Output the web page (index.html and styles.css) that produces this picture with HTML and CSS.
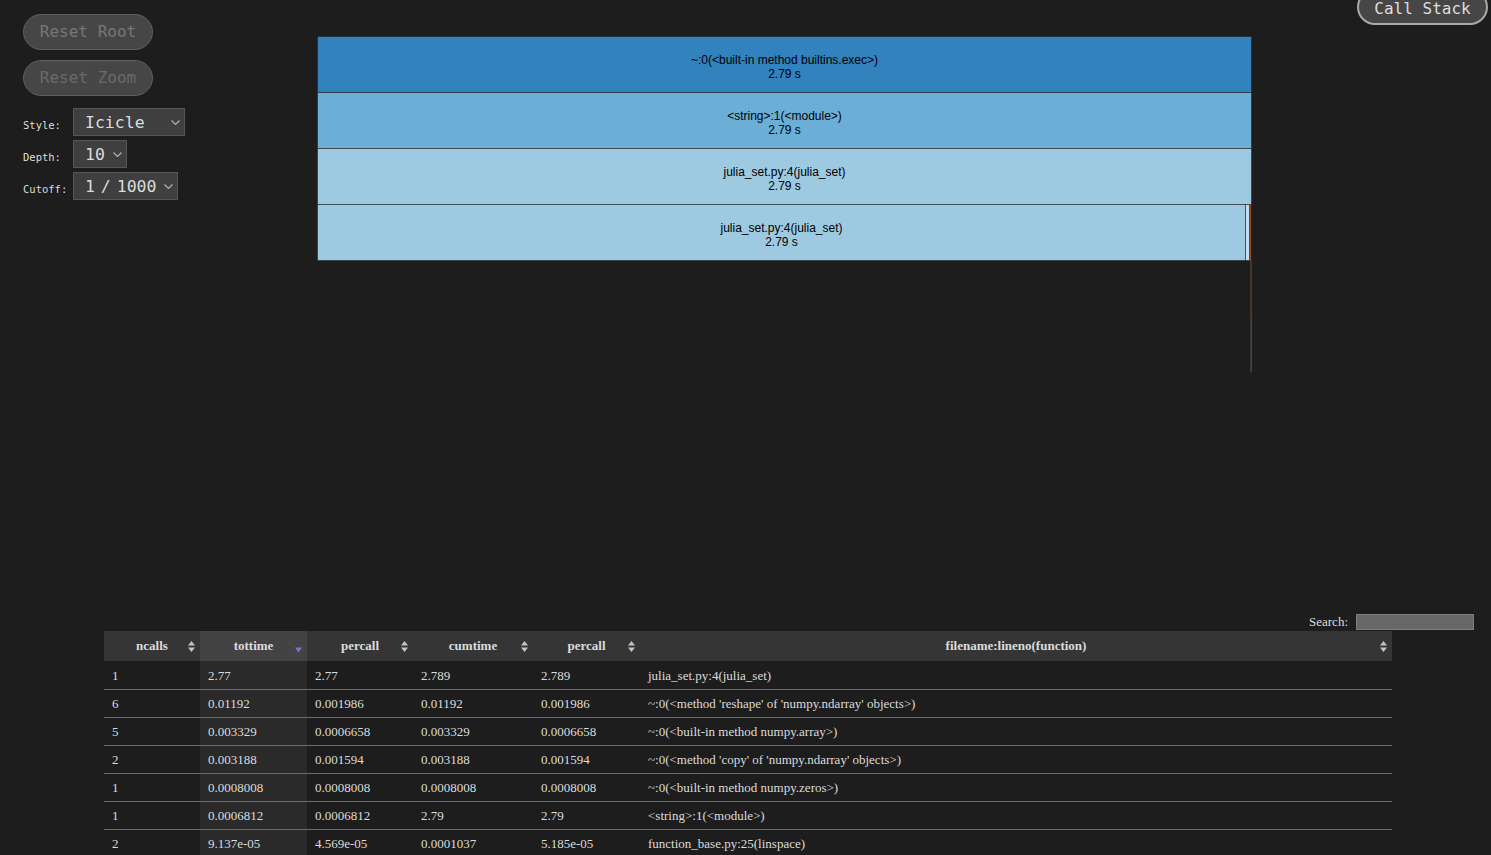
FILE: index.html
```html
<!DOCTYPE html>
<html lang="en">
<head>
<meta charset="utf-8">
<title>SnakeViz</title>
<link rel="stylesheet" href="styles.css">
</head>
<body>
<button class="pill callstack">Call Stack</button>

<div class="top">
  <aside class="sidebar">
    <button class="pill disabled">Reset Root</button>
    <button class="pill disabled dim">Reset Zoom</button>
    <div class="opts">
      <span class="opt-label">Style:</span>
      <div class="sel sel-style"><span>Icicle</span><svg class="chev" width="9" height="5" viewBox="0 0 9 5"><polyline points="0.5,0.5 4.5,4.5 8.5,0.5"/></svg></div>
      <span class="opt-label">Depth:</span>
      <div class="sel sel-depth"><span>10</span><svg class="chev" width="9" height="5" viewBox="0 0 9 5"><polyline points="0.5,0.5 4.5,4.5 8.5,0.5"/></svg></div>
      <span class="opt-label">Cutoff:</span>
      <div class="sel sel-cutoff"><span class="cut">1 / 1000</span><svg class="chev" width="9" height="5" viewBox="0 0 9 5"><polyline points="0.5,0.5 4.5,4.5 8.5,0.5"/></svg></div>
    </div>
  </aside>

  <div class="chart">
    <svg class="icicle" width="940" height="340" viewBox="0 0 940 340">
      <g class="frames">
        <rect x="0.5" y="0.5" width="934" height="56" fill="#3182bd"/>
        <rect x="0.5" y="56.5" width="934" height="56" fill="#6baed6"/>
        <rect x="0.5" y="112.5" width="934" height="56" fill="#9ecae1"/>
        <rect x="0.5" y="168.5" width="928" height="56" fill="#9ecae1"/>
        <rect x="928.5" y="168.5" width="4" height="56" fill="#c6dbef"/>
      </g>
      <rect class="sliver" x="932.7" y="168.5" width="1.4" height="56" fill="#9a4a22"/>
      <rect class="sliver" x="933.7" y="224.5" width="0.7" height="56" fill="#a0623a"/>
      <rect class="sliver" x="933.8" y="280.5" width="0.5" height="56" fill="#9a9a9a"/>
      <g class="labels">
        <text x="467.5" y="28">~:0(&lt;built-in method builtins.exec&gt;)</text>
        <text x="467.5" y="42">2.79 s</text>
        <text x="467.5" y="84">&lt;string&gt;:1(&lt;module&gt;)</text>
        <text x="467.5" y="98">2.79 s</text>
        <text x="467.5" y="140">julia_set.py:4(julia_set)</text>
        <text x="467.5" y="154">2.79 s</text>
        <text x="464.5" y="196">julia_set.py:4(julia_set)</text>
        <text x="464.5" y="210">2.79 s</text>
      </g>
    </svg>
  </div>
</div>

<div class="filter">
  <label class="search-label" for="q">Search:</label>
  <input id="q" class="search" type="text">
</div>

<table class="stats">
  <colgroup>
    <col class="c1"><col class="c2"><col class="c3"><col class="c4"><col class="c5"><col class="c6">
  </colgroup>
  <thead>
    <tr>
      <th><div class="hd"><span class="lbl">ncalls</span><svg class="sort" width="7" height="11" viewBox="0 0 7 11"><polygon points="0,4.5 3.5,0 7,4.5"/><polygon points="0,6.5 3.5,11 7,6.5"/></svg></div></th>
      <th class="sorted"><div class="hd"><span class="lbl">tottime</span><svg class="sort desc" width="7" height="11" viewBox="0 0 7 11"><polygon points="0,6.5 3.5,11.5 7,6.5"/></svg></div></th>
      <th><div class="hd"><span class="lbl">percall</span><svg class="sort" width="7" height="11" viewBox="0 0 7 11"><polygon points="0,4.5 3.5,0 7,4.5"/><polygon points="0,6.5 3.5,11 7,6.5"/></svg></div></th>
      <th><div class="hd"><span class="lbl">cumtime</span><svg class="sort" width="7" height="11" viewBox="0 0 7 11"><polygon points="0,4.5 3.5,0 7,4.5"/><polygon points="0,6.5 3.5,11 7,6.5"/></svg></div></th>
      <th><div class="hd"><span class="lbl">percall</span><svg class="sort" width="7" height="11" viewBox="0 0 7 11"><polygon points="0,4.5 3.5,0 7,4.5"/><polygon points="0,6.5 3.5,11 7,6.5"/></svg></div></th>
      <th><div class="hd"><span class="lbl">filename:lineno(function)</span><svg class="sort" width="7" height="11" viewBox="0 0 7 11"><polygon points="0,4.5 3.5,0 7,4.5"/><polygon points="0,6.5 3.5,11 7,6.5"/></svg></div></th>
    </tr>
  </thead>
  <tbody>
    <tr><td>1</td><td class="sc">2.77</td><td>2.77</td><td>2.789</td><td>2.789</td><td>julia_set.py:4(julia_set)</td></tr>
    <tr><td>6</td><td class="sc">0.01192</td><td>0.001986</td><td>0.01192</td><td>0.001986</td><td>~:0(&lt;method 'reshape' of 'numpy.ndarray' objects&gt;)</td></tr>
    <tr><td>5</td><td class="sc">0.003329</td><td>0.0006658</td><td>0.003329</td><td>0.0006658</td><td>~:0(&lt;built-in method numpy.array&gt;)</td></tr>
    <tr><td>2</td><td class="sc">0.003188</td><td>0.001594</td><td>0.003188</td><td>0.001594</td><td>~:0(&lt;method 'copy' of 'numpy.ndarray' objects&gt;)</td></tr>
    <tr><td>1</td><td class="sc">0.0008008</td><td>0.0008008</td><td>0.0008008</td><td>0.0008008</td><td>~:0(&lt;built-in method numpy.zeros&gt;)</td></tr>
    <tr><td>1</td><td class="sc">0.0006812</td><td>0.0006812</td><td>2.79</td><td>2.79</td><td>&lt;string&gt;:1(&lt;module&gt;)</td></tr>
    <tr><td>2</td><td class="sc">9.137e-05</td><td>4.569e-05</td><td>0.0001037</td><td>5.185e-05</td><td>function_base.py:25(linspace)</td></tr>
  </tbody>
</table>
</body>
</html>
```

FILE: styles.css
```css
html, body {
  margin: 0;
  padding: 0;
  background: #1d1d1d;
  color: #dcdcdc;
}

body {
  position: relative;
  width: 1491px;
  height: 855px;
  overflow: hidden;
  font-family: "Liberation Serif", "Times New Roman", serif;
}

.pill {
  display: block;
  box-sizing: border-box;
  height: 36px;
  width: 130px;
  padding: 0;
  border-radius: 18px;
  font-family: "DejaVu Sans Mono", monospace;
  font-size: 16px;
  line-height: 1;
  text-align: center;
}

.callstack {
  position: absolute;
  top: -11px;
  right: 3px;
  width: 131px;
  background: #464646;
  border: 2px solid #a9a9a9;
  color: #dedede;
  padding-top: 3px;
}

.disabled {
  background: #464646;
  border: 1px solid #5f5f5f;
  color: #777777;
}

.dim {
  color: #6a6a6a;
}

.top {
  display: flex;
  height: 612px;
}

.sidebar {
  box-sizing: border-box;
  width: 317px;
  padding: 14px 0 0 23px;
  display: flex;
  flex-direction: column;
  gap: 10px;
}

.opts {
  margin-top: 2px;
  display: grid;
  grid-template-columns: 50px auto;
  row-gap: 4px;
  justify-items: start;
}

.opt-label {
  font-family: "DejaVu Sans Mono", monospace;
  font-size: 10.5px;
  color: #dcdcdc;
  align-self: center;
  padding-top: 5px;
}

.sel {
  box-sizing: border-box;
  height: 28px;
  display: flex;
  align-items: center;
  justify-content: space-between;
  padding: 0 4px 0 11px;
  background: #3f3f3f;
  border: 1px solid #555555;
  font-family: "DejaVu Sans Mono", monospace;
  font-size: 16.5px;
  color: #dcdcdc;
}

.sel-style { width: 112px; }
.sel-depth { width: 54px; }
.sel-cutoff { width: 105px; }

.cut {
  word-spacing: -4px;
}

.chev polyline {
  fill: none;
  stroke: #b5b5b5;
  stroke-width: 1.1;
}

.chart {
  padding-top: 36px;
}

.icicle {
  display: block;
}

.frames rect {
  stroke: #1d1d1d;
  stroke-opacity: 0.55;
  stroke-width: 1;
}

.labels text {
  font-family: "Liberation Sans", Arial, sans-serif;
  font-size: 12px;
  fill: #000000;
  text-anchor: middle;
}

.filter {
  display: flex;
  justify-content: flex-end;
  align-items: center;
  gap: 8px;
  height: 19px;
  padding-right: 17px;
}

.search-label {
  font-size: 13px;
  color: #dcdcdc;
}

.search {
  box-sizing: border-box;
  width: 118px;
  height: 16px;
  margin: 0;
  padding: 0 3px;
  background: #676767;
  border: 1px solid #7e7e7e;
  color: #dcdcdc;
}

.stats {
  margin-left: 104px;
  width: 1288px;
  table-layout: fixed;
  border-collapse: separate;
  border-spacing: 0;
  font-size: 13px;
  color: #dcdcdc;
}

.c1 { width: 96px; }
.c2 { width: 107px; }
.c3 { width: 106px; }
.c4 { width: 120px; }
.c5 { width: 107px; }
.c6 { width: 752px; }

.stats th {
  height: 30px;
  padding: 0;
  background: #353535;
  font-weight: bold;
  color: #dcdcdc;
}

.stats th.sorted {
  background: #434343;
}

.hd {
  display: grid;
  grid-template-columns: 1fr auto 1fr;
  align-items: center;
  padding: 0 5px;
}

.hd .lbl {
  grid-column: 2;
  white-space: nowrap;
}

.hd .sort {
  grid-column: 3;
  justify-self: end;
  display: block;
}

.sort polygon {
  fill: #c4c4c4;
}

.sort.desc polygon {
  fill: #7575d8;
}

.stats td {
  padding: 6px 8px;
  line-height: 15px;
  border-top: 1px solid #6b6b6b;
  white-space: nowrap;
  overflow: hidden;
}

.stats tbody tr:first-child td {
  border-top-color: transparent;
}

.stats td.sc {
  background: #2a2a2a;
}
```
